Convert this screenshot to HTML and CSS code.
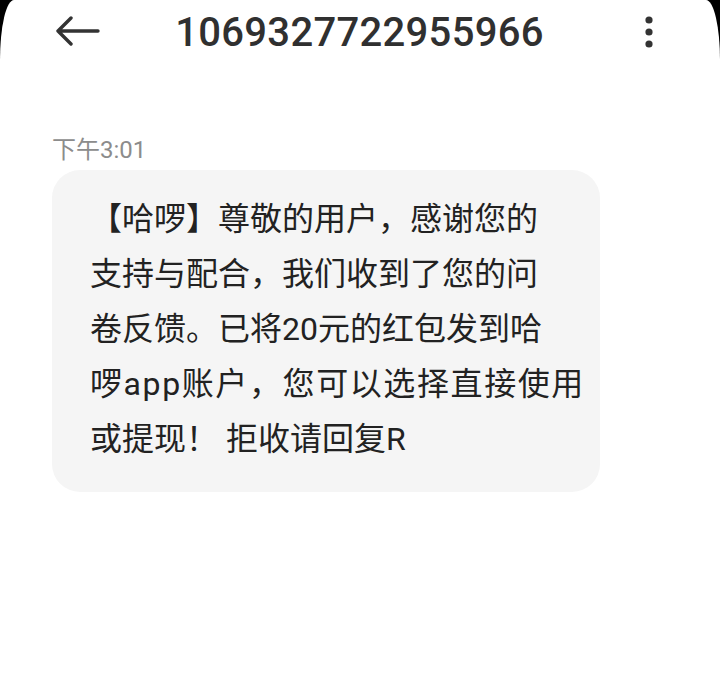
FILE: index.html
```html
<!DOCTYPE html>
<html lang="zh-CN">
<head>
    <meta charset="UTF-8">
    <meta name="viewport" content="width=device-width, initial-scale=1.0">
    <title>1069327722955966</title>
    <link rel="stylesheet" href="styles.css">
</head>
<body>

    <div class="screen">
        <div class="header">
            <svg class="back" width="44" height="32" viewBox="0 0 44 32">
                <path d="M2 15 H42 M2 15 L15 2 M2 15 L15 28" fill="none" stroke="#333" stroke-width="3.4" stroke-linecap="round" stroke-linejoin="round"/>
            </svg>
            <div class="title">1069327722955966</div>
            <svg class="more" width="12" height="34" viewBox="0 0 12 34">
                <circle cx="6" cy="5" r="3.6" fill="#333"/>
                <circle cx="6" cy="17" r="3.6" fill="#333"/>
                <circle cx="6" cy="29" r="3.6" fill="#333"/>
            </svg>
        </div>

        <div class="thread">
            <div class="time">下午3:01</div>
            <div class="bubble">
                【哈啰】尊敬的用户，感谢您的<br>
                支持与配合，我们收到了您的问<br>
                卷反馈。已将20元的红包发到哈<br>
                <span class="wide">啰app账户，您可以选择直接使用</span><br>
                或提现！&nbsp;拒收请回复R
            </div>
        </div>
    </div>

</body>
</html>
```

FILE: styles.css
```css
body {
    margin: 0;
    padding: 0;
    background-color: #000;
    font-family: Roboto, "Noto Sans CJK SC", sans-serif;
}

.screen {
    min-height: 674px;
    background-color: #fff;
    border-top-left-radius: 14px 60px;
    border-top-right-radius: 14px 60px;
}

.header {
    height: 66px;
    display: grid;
    grid-template-columns: 1fr auto 1fr;
    align-items: center;
    padding: 0 65px 0 56px;
}

.back {
    justify-self: start;
    margin-top: -2px;
}

.more {
    justify-self: end;
    margin-top: -2px;
}

.title {
    font-size: 40px;
    font-weight: 500;
    color: #303030;
    line-height: 66px;
    letter-spacing: 0.3px;
    margin-left: 8px;
}

.thread {
    padding: 69px 0 0 52px;
}

.time {
    font-size: 24px;
    line-height: 30px;
    color: #8c8c8c;
    margin-bottom: 5px;
}

.bubble {
    width: 510px;
    padding: 22px 0 25px 38px;
    background-color: #f5f5f5;
    border-radius: 28px;
    font-size: 32px;
    line-height: 55px;
    color: #222;
}

.wide {
    letter-spacing: 1.6px;
}
```
